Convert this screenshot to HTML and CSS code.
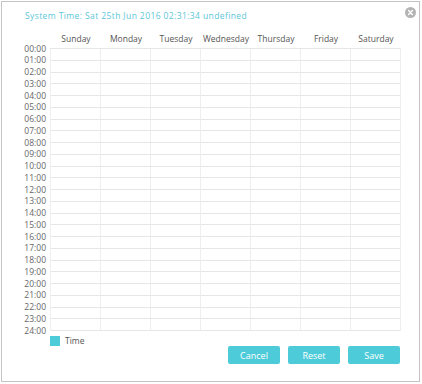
FILE: index.html
```html
<!DOCTYPE html>
<html lang="en">
<head>
  <meta charset="UTF-8">
  <title>Schedule</title>
  <link rel="stylesheet" href="styles.css">
</head>
<body>
  <div class="dialog">
    <button class="close-btn" title="Close">
      <svg width="11" height="11" viewBox="0 0 11 11">
        <circle cx="5.5" cy="5.5" r="5.5" fill="#b4b4b4"/>
        <path d="M3.6 3.6 L7.4 7.4 M7.4 3.6 L3.6 7.4" stroke="#fff" stroke-width="1.4" stroke-linecap="round"/>
      </svg>
    </button>

    <div class="system-time">System Time: Sat 25th Jun 2016 02:31:34 undefined</div>

    <div class="days">
      <span>Sunday</span>
      <span>Monday</span>
      <span>Tuesday</span>
      <span>Wednesday</span>
      <span>Thursday</span>
      <span>Friday</span>
      <span>Saturday</span>
    </div>

    <div class="schedule">
      <div class="hours" id="hours"></div>
      <div class="cells" id="cells"></div>
    </div>

    <div class="legend">
      <span class="legend-box"></span>
      <span>Time</span>
    </div>

    <div class="actions">
      <button class="btn">Cancel</button>
      <button class="btn">Reset</button>
      <button class="btn">Save</button>
    </div>
  </div>

  <script>
    const hours = document.getElementById('hours');
    const cells = document.getElementById('cells');

    for (let h = 0; h <= 24; h++) {
      const label = document.createElement('div');
      label.className = 'hour';
      label.textContent = String(h).padStart(2, '0') + ':00';
      hours.appendChild(label);
    }

    for (let i = 0; i < 24 * 7; i++) {
      const cell = document.createElement('div');
      cell.className = 'cell';
      cells.appendChild(cell);
    }
  </script>
</body>
</html>
```
FILE: styles.css
```css
body {
  margin: 0;
  padding: 1px;
  font-family: "Open Sans", "Liberation Sans", sans-serif;
  background-color: #fff;
}
.dialog {
  position: relative;
  width: 417px;
  height: 379px;
  border: 1px solid #c4c4c4;
  background-color: #fff;
}
.close-btn {
  position: absolute;
  top: 5px;
  right: 3px;
  padding: 0;
  border: none;
  background: none;
  cursor: pointer;
  line-height: 0;
}
.system-time {
  margin: 8px 0 0 23px;
  font-size: 8.5px;
  letter-spacing: 0.4px;
  line-height: 12px;
  color: #5cc6d8;
}
.days {
  display: grid;
  grid-template-columns: repeat(7, 50px);
  margin: 11px 0 0 49px;
  font-size: 8.5px;
  line-height: 12px;
  color: #555;
  text-align: center;
}
.schedule {
  display: flex;
  align-items: flex-start;
  margin-top: 3px;
}
.hours {
  display: grid;
  grid-template-rows: repeat(25, 11.75px);
  width: 44px;
  margin: -5.4px 4px -6.35px 0;
  font-size: 8.5px;
  color: #666;
  text-align: right;
}
.hour {
  line-height: 11.75px;
}
.cells {
  display: grid;
  grid-template-columns: repeat(7, 50px);
  grid-template-rows: repeat(24, 11.75px);
  border-top: 1px solid #e6e6e6;
  border-left: 1px solid #eee;
}
.cell {
  border-right: 1px solid #eee;
  border-bottom: 1px solid #e6e6e6;
}
.legend {
  display: flex;
  align-items: center;
  gap: 5px;
  margin: 4px 0 0 48px;
  font-size: 8.5px;
  color: #555;
}
.legend-box {
  width: 10px;
  height: 10px;
  background-color: #4ecbd8;
}
.actions {
  display: flex;
  justify-content: flex-end;
  gap: 8px;
  margin: 0 19px 0 0;
}
.btn {
  width: 52px;
  height: 18px;
  padding: 0;
  border: none;
  border-radius: 2px;
  background-color: #4ecbd8;
  color: #fff;
  font-family: "Open Sans", "Liberation Sans", sans-serif;
  font-size: 9px;
  cursor: pointer;
}
```
